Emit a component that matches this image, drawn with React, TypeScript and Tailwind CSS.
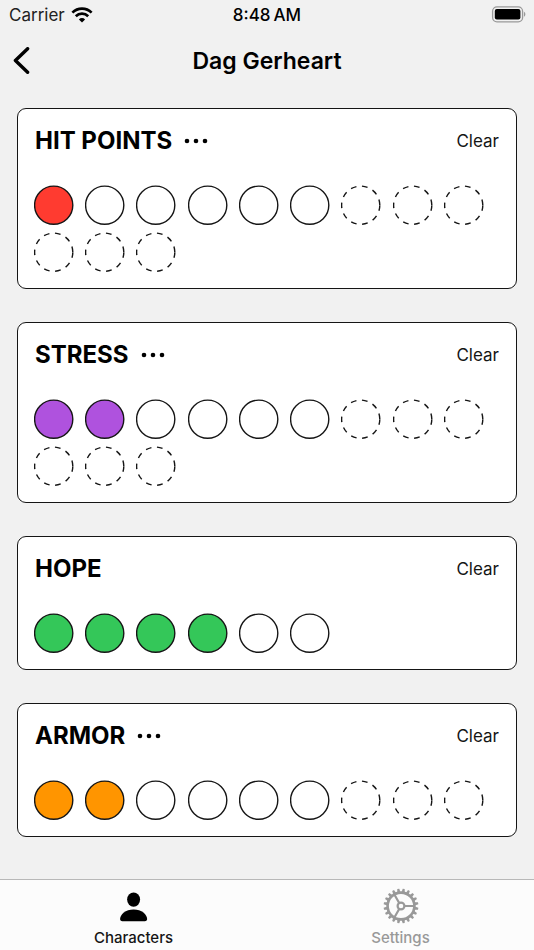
import { useState } from "react";

type Track = {
  name: string;
  color: string;
  filled: number;
  open: number;
  extra: number;
  editable: boolean;
};

const initialTracks: Track[] = [
  { name: "HIT POINTS", color: "#ff3b30", filled: 1, open: 6, extra: 6, editable: true },
  { name: "STRESS", color: "#af52de", filled: 2, open: 6, extra: 6, editable: true },
  { name: "HOPE", color: "#34c759", filled: 4, open: 6, extra: 0, editable: false },
  { name: "ARMOR", color: "#ff9500", filled: 2, open: 6, extra: 3, editable: true },
];

function Slot({ fill, dashed }: { fill: string; dashed: boolean }) {
  return (
    <svg viewBox="0 0 40 40" className="block size-10" aria-hidden="true">
      <circle
        cx="19.7"
        cy="20.2"
        r="19.1"
        fill={fill}
        stroke="#151515"
        strokeWidth="1.4"
        strokeDasharray={dashed ? "5.67 5.67" : undefined}
      />
    </svg>
  );
}

function TrackCard({ track }: { track: Track }) {
  const [filled, setFilled] = useState(track.filled);
  const total = track.open + track.extra;
  return (
    <section className="rounded-[9px] border border-[#151515] bg-white p-4">
      <div className="flex h-8 items-center">
        <h2 className="pl-px text-2xl font-bold text-black">{track.name}</h2>
        {track.editable && (
          <button type="button" aria-label={`Edit ${track.name}`} className="ml-[11px] flex h-8 items-center">
            <svg viewBox="0 0 26 8" className="h-2 w-[26px]" aria-hidden="true">
              <circle cx="4" cy="4" r="2.3" />
              <circle cx="13" cy="4" r="2.3" />
              <circle cx="22" cy="4" r="2.3" />
            </svg>
          </button>
        )}
        <button type="button" onClick={() => setFilled(0)} className="ml-auto pr-px text-[17px] leading-6 text-[#151515]">
          Clear
        </button>
      </div>
      <div className="mt-7 grid grid-cols-9 gap-y-[7px] pr-[5px]">
        {Array.from({ length: total }, (_, i) => (
          <button
            key={i}
            type="button"
            aria-label={`${track.name} ${i + 1}`}
            onClick={() => setFilled(i + 1)}
            className="size-10"
          >
            <Slot fill={i < filled ? track.color : "white"} dashed={i >= track.open} />
          </button>
        ))}
      </div>
    </section>
  );
}

function GearIcon() {
  return (
    <svg viewBox="0 0 36 36" className="size-9" fill="none" stroke="currentColor" aria-hidden="true">
      <circle cx="18" cy="18" r="13.4" strokeWidth="2.6" />
      <circle cx="18" cy="18" r="3.4" strokeWidth="2.2" />
      <path d="M21.5 18H31M16.2 15 11.2 6.3M16.2 21l-5 8.7" strokeWidth="2.2" />
      {Array.from({ length: 20 }, (_, i) => (
        <path key={i} d="M16.4 4.2 17 .6h2l.6 3.600z" fill="currentColor" stroke="none" transform={`rotate(${i * 18 + 9} 18 18)`} />
      ))}
    </svg>
  );
}

export default function App() {
  return (
    <div className="flex min-h-screen flex-col bg-[#f1f1f1] font-['Inter','Liberation_Sans',sans-serif] text-black">
      <div className="grid h-[30px] grid-cols-3 items-center px-2 text-[17px] leading-6">
        <div className="flex items-center gap-[6px] pl-px text-[#222]">
          <span>Carrier</span>
          <svg viewBox="0 0 22 16" className="h-4 w-[22px]" fill="none" stroke="black" strokeWidth="2.7" aria-hidden="true">
            <path d="M1.4 5.6a13.6 13.6 0 0 1 19.2 0" />
            <path d="M4.8 9.2a8.8 8.8 0 0 1 12.4 0" />
            <path d="M11 15.6 7.9 12.4a4.4 4.4 0 0 1 6.2 0z" fill="black" stroke="none" />
          </svg>
        </div>
        <span className="text-center font-medium">8:48{"\u2009"}AM</span>
        <svg viewBox="0 0 35 18" className="h-[18px] w-[35px] justify-self-end" aria-hidden="true">
          <rect x="1.6" y="0.8" width="30" height="15" rx="4.4" fill="none" stroke="#999" strokeWidth="1.3" />
          <rect x="3.8" y="3" width="25.6" height="10.6" rx="2" />
          <path d="M33 5.800v5c1.800-.8 1.800-4.200 0-5z" fill="#999" />
        </svg>
      </div>
      <header className="grid h-[62px] grid-cols-[44px_1fr_44px] items-center">
        <button type="button" aria-label="Back" className="flex h-11 items-center pl-3">
          <svg viewBox="0 0 18 28" className="h-7 w-[18px]" fill="none" stroke="black" strokeWidth="3.4" strokeLinecap="round" strokeLinejoin="round" aria-hidden="true">
            <path d="M15.6 1.700 3.400 13.500l12.200 11.800" />
          </svg>
        </button>
        <h1 className="text-center text-[23px] leading-8 font-semibold">Dag Gerheart</h1>
      </header>
      <main className="flex flex-1 flex-col gap-[33px] px-[17px] pt-4 pb-8">
        {initialTracks.map((track) => (
          <TrackCard key={track.name} track={track} />
        ))}
      </main>
      <nav className="grid h-[71px] grid-cols-2 border-t border-[#b8b8b8] bg-[#fcfcfc] text-[15px] leading-5 font-medium">
        <a href="#characters" aria-current="page" className="flex flex-col items-center gap-1 pt-2 text-[#151515]">
          <svg viewBox="0 0 36 36" className="size-9" fill="black" aria-hidden="true">
            <ellipse cx="17.600" cy="11.600" rx="6.500" ry="7.200" />
            <path d="M6.400 33.200c-1.600 0-2.300-.8-2.300-2.200 0-4.600 5.500-9.600 13.500-9.600s13.500 5 13.500 9.600c0 1.400-.7 2.200-2.300 2.200z" />
          </svg>
          <span>Characters</span>
        </a>
        <a href="#settings" className="flex flex-col items-center gap-1 pt-2 text-[#999]">
          <GearIcon />
          <span>Settings</span>
        </a>
      </nav>
    </div>
  );
}
